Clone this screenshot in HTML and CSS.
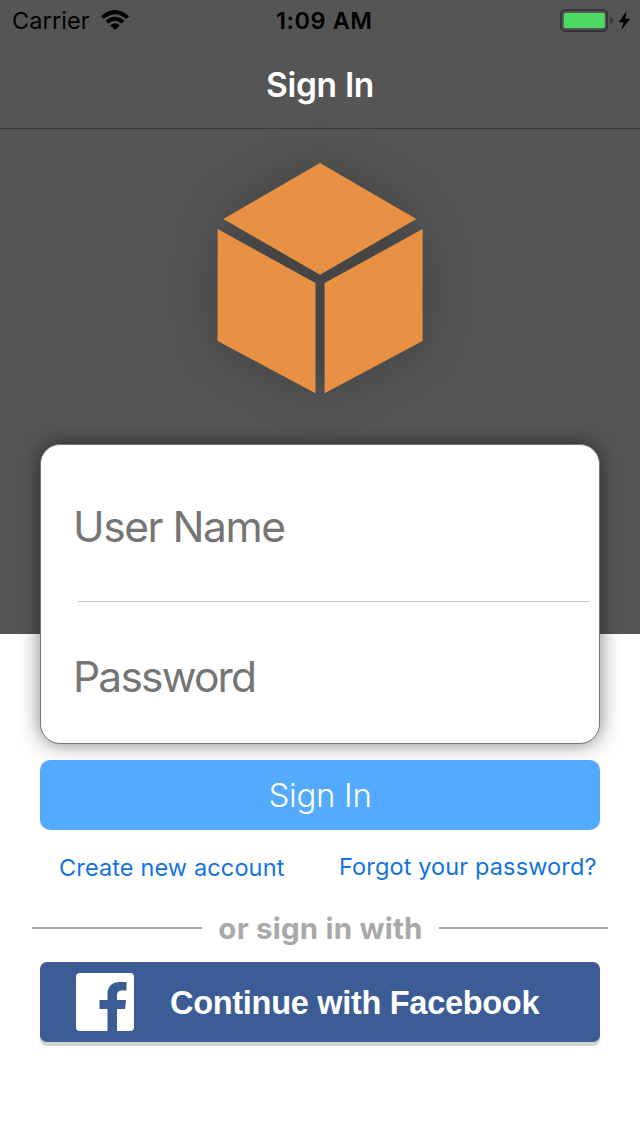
FILE: index.html
```html
<!DOCTYPE html>
<html lang="en">
<head>
<meta charset="utf-8">
<title>Sign In</title>
<link rel="stylesheet" href="styles.css">
</head>
<body>
<header class="hero">
  <div class="status">
    <div class="status-left">
      <span class="carrier">Carrier</span>
      <svg class="wifi" width="30" height="22" viewBox="0 0 30 22">
        <path d="M1 7.2Q15-5.2 29 7.2L26.2 10Q15 .3 3.8 10Z"/>
        <path d="M5.6 11.8Q15 3.8 24.4 11.8L21.7 14.5Q15 8.8 8.3 14.5Z"/>
        <path d="M10.3 16.4Q15 12.2 19.7 16.4L15 21Z"/>
      </svg>
    </div>
    <span class="time">1:09 AM</span>
    <svg class="battery" width="72" height="26" viewBox="0 0 72 26">
      <rect x="1" y="2" width="46" height="21" rx="4.5" fill="none" stroke="#373539" stroke-width="2"/>
      <rect x="3.8" y="5" width="41" height="15" rx="1.5" fill="#4cd964"/>
      <path d="M50 9Q53 10 53 12.5T50 16Z" fill="#373539"/>
      <path d="M66.5 3L58.8 14.2H63.5L61.5 21.7L70.2 10.8H65.3Z" fill="#000"/>
    </svg>
  </div>
  <h1 class="navbar"><span>Sign In</span></h1>
  <div class="logo">
    <svg class="cube" width="206" height="232" viewBox="217 162 206 232" fill="#e89043">
      <path d="M320 163L416.3 219L320 274.8L223.3 219Z"/>
      <path d="M217.6 229L315.5 283V393.3L217.6 341Z"/>
      <path d="M422.6 229L324.6 283V393.3L422.6 341Z"/>
    </svg>
  </div>
</header>
<main class="content">
  <form class="card">
    <div class="field user"><span>User Name</span></div>
    <div class="field password"><span>Password</span></div>
  </form>
  <div class="signin"><span>Sign In</span></div>
  <nav class="links"><a class="create">Create new account</a><a class="forgot">Forgot your password?</a></nav>
  <div class="divider"><i></i><span>or sign in with</span><i></i></div>
  <div class="facebook">
    <svg width="58" height="58" viewBox="0 0 58 58">
      <rect width="58" height="58" rx="4" fill="#fff"/>
      <path d="M31.5 58V36H23.5V27H31.5V21C31.5 13 36.5 9 43.5 9H50.5V17.5H46C42.5 17.5 41 19 41 22V27H50L49 36H41V58Z" fill="#3c5c95"/>
    </svg>
    <span>Continue with Facebook</span>
  </div>
</main>
</body>
</html>
```
FILE: styles.css
```css
* { box-sizing: border-box; }
body { margin: 0; width: 640px; height: 1136px; background: #fff; overflow: hidden; font-family: Inter, "Liberation Sans", sans-serif; }
span, a { white-space: nowrap; }
svg { display: block; flex: none; }
.hero { height: 634px; background: #555; }
.status { height: 40px; display: grid; grid-template-columns: 276px 1fr 80px; grid-template-rows: 40px; align-items: center; font-size: 23.5px; line-height: 40px; color: #000; }
.status-left { display: flex; align-items: center; padding-left: 12px; }
.carrier { width: 88px; letter-spacing: .1px; padding-top: 2px; }
.time { font-weight: 600; letter-spacing: .55px; padding-top: 2px; }
.battery { margin-top: 1px; }
.navbar { margin: 0; height: 89px; border-bottom: 1px solid #3b3b3b; display: flex; justify-content: center; color: #fff; font-size: 33.5px; line-height: 90px; font-weight: 600; letter-spacing: -.3px; }
.logo { display: flex; justify-content: center; padding-top: 33px; }
.cube { filter: drop-shadow(0 0 24px rgba(0, 0, 0, .23)); overflow: visible; }
.content { padding: 0 40px; margin-top: -190px; display: flex; flex-direction: column; }
.card { width: 560px; height: 300px; background: #fff; border: 1px solid #777; border-radius: 20px; box-shadow: 0 0 20px rgba(0, 0, 0, .5); padding: 7px 9px 0 37px; }
.field { display: flex; align-items: center; height: 150px; font-size: 42.5px; color: #757575; letter-spacing: -1.45px; }
.field span { margin-left: -5px; }
.password { letter-spacing: -1.8px; height: 149px; }
.user { border-bottom: 1px solid #c8c7cc; }
.signin { margin-top: 16px; height: 70px; border-radius: 10px; background: #54aaff; color: #fff; font-size: 33px; line-height: 71px; font-weight: 350; letter-spacing: -.3px; text-align: center; }
.links { display: flex; height: 76px; line-height: 76px; font-size: 23.5px; letter-spacing: .13px; color: #1273df; }
.create { width: 280px; padding-left: 19px; }
.forgot { padding-left: 19px; line-height: 74px; }
.divider { display: flex; align-items: center; justify-content: space-between; height: 44px; margin: 0 -8px; color: #a9a9a9; font-size: 29.5px; font-weight: 700; letter-spacing: .2px; }
.divider i { width: 170px; height: 2px; background: #a9a9a9; }
.divider i:last-child { width: 169px; }
.facebook { margin-top: 12px; height: 80px; border-radius: 7px; background: #3c5c95; box-shadow: 0 4px 0 #d2d2d0; display: flex; align-items: center; padding-left: 36px; color: #fff; font-family: "Liberation Sans", Arial, sans-serif; font-size: 32.5px; font-weight: 700; letter-spacing: -.29px; }
.facebook span { margin-left: 36px; padding-top: 2px; }
```
